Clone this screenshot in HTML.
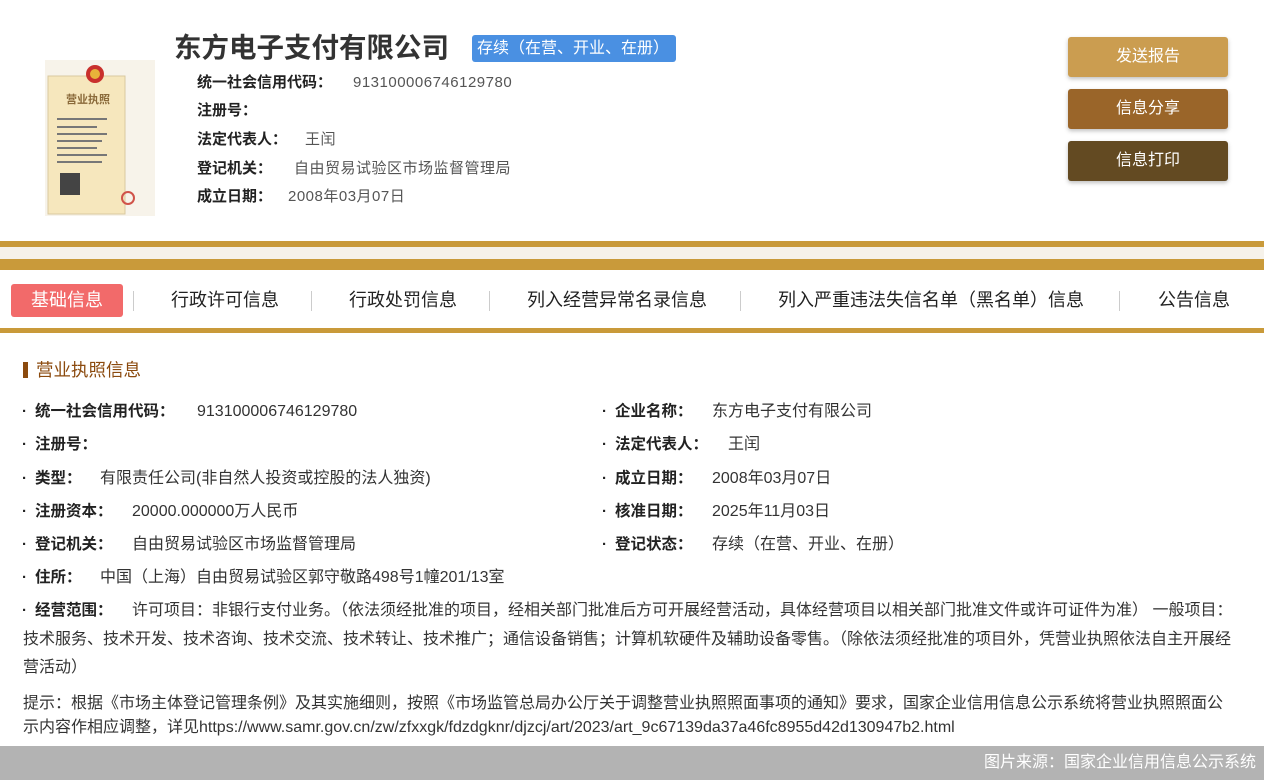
<!DOCTYPE html>
<html><head><meta charset="utf-8"><style>
*{margin:0;padding:0;box-sizing:border-box}
body{width:1264px;height:780px;position:relative;background:#fff;font-family:"Liberation Sans","Noto Sans CJK SC",sans-serif;color:#333;overflow:hidden}
.a{position:absolute;white-space:nowrap}
.t{font-size:15px;line-height:20px}
.h{font-size:15px;line-height:20px;font-weight:bold;color:#222}
.hv{font-size:15px;line-height:20px;color:#555;letter-spacing:.5px}
.l{position:absolute;white-space:nowrap;font-size:15.5px;line-height:20px;font-weight:bold;color:#222}
.v{position:absolute;white-space:nowrap;font-size:16px;line-height:20px;color:#333}
.d{position:absolute;font-size:15px;line-height:20px;font-weight:bold;color:#222}
.btn{position:absolute;left:1068px;width:160px;height:40px;border-radius:3px;color:#fff;font-size:16px;line-height:40px;text-align:center;box-shadow:0 2px 4px rgba(0,0,0,.25)}
.nav{position:absolute;top:289px;font-size:18px;line-height:22px;color:#222}
.sep{position:absolute;top:291px;width:1px;height:20px;background:#ccc}
</style></head><body>
<svg class="a" style="left:45px;top:60px" width="110" height="156" viewBox="0 0 110 156">
<rect width="110" height="156" fill="#f7f3ea"/>
<rect x="3" y="16" width="77" height="138" fill="#f6e7bd" stroke="#d9c9a0"/>
<circle cx="50" cy="14" r="9" fill="#c9302c"/><circle cx="50" cy="14" r="5" fill="#e8b43a"/>
<text x="21" y="43" font-size="11" fill="#8a6a3a" font-family="Noto Sans CJK SC" font-weight="bold">营业执照</text>
<g fill="#777"><rect x="12" y="58" width="50" height="2"/><rect x="12" y="66" width="40" height="2"/><rect x="12" y="73" width="50" height="2"/><rect x="12" y="80" width="45" height="2"/><rect x="12" y="87" width="40" height="2"/><rect x="12" y="94" width="50" height="2"/><rect x="12" y="101" width="45" height="2"/></g>
<rect x="15" y="113" width="20" height="22" fill="#444"/>
<circle cx="83" cy="138" r="6" fill="none" stroke="#d0534a" stroke-width="2"/>
</svg>
<div class="a" style="left:174px;top:30px;font-size:27.5px;line-height:36px;font-weight:bold;color:#333">东方电子支付有限公司</div>
<div class="a" style="left:472px;top:35px;width:204px;height:27px;background:#4a90e2;border-radius:3px;color:#fff;font-size:16px;line-height:27px;padding-left:5px">存续（在营、开业、在册）</div>
<div class="a h" style="left:197px;top:73px">统一社会信用代码：</div><div class="a hv" style="left:353px;top:73px">913100006746129780</div>
<div class="a h" style="left:197px;top:101px">注册号：</div>
<div class="a h" style="left:197px;top:130px">法定代表人：</div><div class="a hv" style="left:305px;top:130px">王闰</div>
<div class="a h" style="left:197px;top:159px">登记机关：</div><div class="a hv" style="left:294px;top:159px">自由贸易试验区市场监督管理局</div>
<div class="a h" style="left:197px;top:187px">成立日期：</div><div class="a hv" style="left:288px;top:187px">2008年03月07日</div>
<div class="btn" style="top:37px;background:#cb9d50">发送报告</div>
<div class="btn" style="top:89px;background:#9a6529">信息分享</div>
<div class="btn" style="top:141px;background:#634a22">信息打印</div>
<div class="a" style="left:0;top:241px;width:1264px;height:6px;background:#c99a3a"></div>
<div class="a" style="left:0;top:247px;width:1264px;height:12px;background:#f6f2ea"></div>
<div class="a" style="left:0;top:259px;width:1264px;height:11px;background:#c99a3a"></div>
<div class="a" style="left:0;top:328px;width:1264px;height:5px;background:#c99a3a"></div>
<div class="a" style="left:11px;top:284px;width:112px;height:33px;background:#f26a6a;border-radius:3px;color:#fff;font-size:18px;line-height:33px;text-align:center">基础信息</div>
<div class="sep" style="left:133px"></div><div class="sep" style="left:311px"></div><div class="sep" style="left:489px"></div><div class="sep" style="left:740px"></div><div class="sep" style="left:1119px"></div>
<div class="nav" style="left:171px">行政许可信息</div>
<div class="nav" style="left:349px">行政处罚信息</div>
<div class="nav" style="left:527px">列入经营异常名录信息</div>
<div class="nav" style="left:778px">列入严重违法失信名单（黑名单）信息</div>
<div class="nav" style="left:1158px">公告信息</div>
<div class="a" style="left:23px;top:362px;width:5px;height:16px;background:#8b4a0e"></div>
<div class="a" style="left:36px;top:359px;font-size:17.5px;line-height:22px;color:#8b4a0e">营业执照信息</div>

<div class="d" style="left:22px;top:402px">·</div><div class="l" style="left:35px;top:402px">统一社会信用代码：</div><div class="v" style="left:197px;top:402px">913100006746129780</div>
<div class="d" style="left:22px;top:435px">·</div><div class="l" style="left:35px;top:435px">注册号：</div>
<div class="d" style="left:22px;top:469px">·</div><div class="l" style="left:35px;top:469px">类型：</div><div class="v" style="left:100px;top:469px">有限责任公司(非自然人投资或控股的法人独资)</div>
<div class="d" style="left:22px;top:502px">·</div><div class="l" style="left:35px;top:502px">注册资本：</div><div class="v" style="left:132px;top:502px">20000.000000万人民币</div>
<div class="d" style="left:22px;top:535px">·</div><div class="l" style="left:35px;top:535px">登记机关：</div><div class="v" style="left:132px;top:535px">自由贸易试验区市场监督管理局</div>
<div class="d" style="left:22px;top:568px">·</div><div class="l" style="left:35px;top:568px">住所：</div><div class="v" style="left:100px;top:568px">中国（上海）自由贸易试验区郭守敬路498号1幢201/13室</div>

<div class="d" style="left:602px;top:402px">·</div><div class="l" style="left:615px;top:402px">企业名称：</div><div class="v" style="left:712px;top:402px">东方电子支付有限公司</div>
<div class="d" style="left:602px;top:435px">·</div><div class="l" style="left:615px;top:435px">法定代表人：</div><div class="v" style="left:728px;top:435px">王闰</div>
<div class="d" style="left:602px;top:469px">·</div><div class="l" style="left:615px;top:469px">成立日期：</div><div class="v" style="left:712px;top:469px">2008年03月07日</div>
<div class="d" style="left:602px;top:502px">·</div><div class="l" style="left:615px;top:502px">核准日期：</div><div class="v" style="left:712px;top:502px">2025年11月03日</div>
<div class="d" style="left:602px;top:535px">·</div><div class="l" style="left:615px;top:535px">登记状态：</div><div class="v" style="left:712px;top:535px">存续（在营、开业、在册）</div>

<div class="d" style="left:22px;top:601px">·</div><div class="l" style="left:35px;top:601px">经营范围：</div>
<div class="v" style="left:132px;top:601px">许可项目：非银行支付业务。（依法须经批准的项目，经相关部门批准后方可开展经营活动，具体经营项目以相关部门批准文件或许可证件为准） 一般项目：</div>
<div class="v" style="left:23px;top:630px">技术服务、技术开发、技术咨询、技术交流、技术转让、技术推广；通信设备销售；计算机软硬件及辅助设备零售。（除依法须经批准的项目外，凭营业执照依法自主开展经</div>
<div class="v" style="left:23px;top:658px">营活动）</div>
<div class="v" style="left:23px;top:694px">提示：根据《市场主体登记管理条例》及其实施细则，按照《市场监管总局办公厅关于调整营业执照照面事项的通知》要求，国家企业信用信息公示系统将营业执照照面公</div>
<div class="v" style="left:23px;top:718px">示内容作相应调整，详见https://www.samr.gov.cn/zw/zfxxgk/fdzdgknr/djzcj/art/2023/art_9c67139da37a46fc8955d42d130947b2.html</div>
<div class="a" style="left:0;top:746px;width:1264px;height:34px;background:#b3b3b3"></div>
<div class="a" style="right:8px;top:753px;font-size:16px;line-height:20px;color:#fff">图片来源：国家企业信用信息公示系统</div>
</body></html>
